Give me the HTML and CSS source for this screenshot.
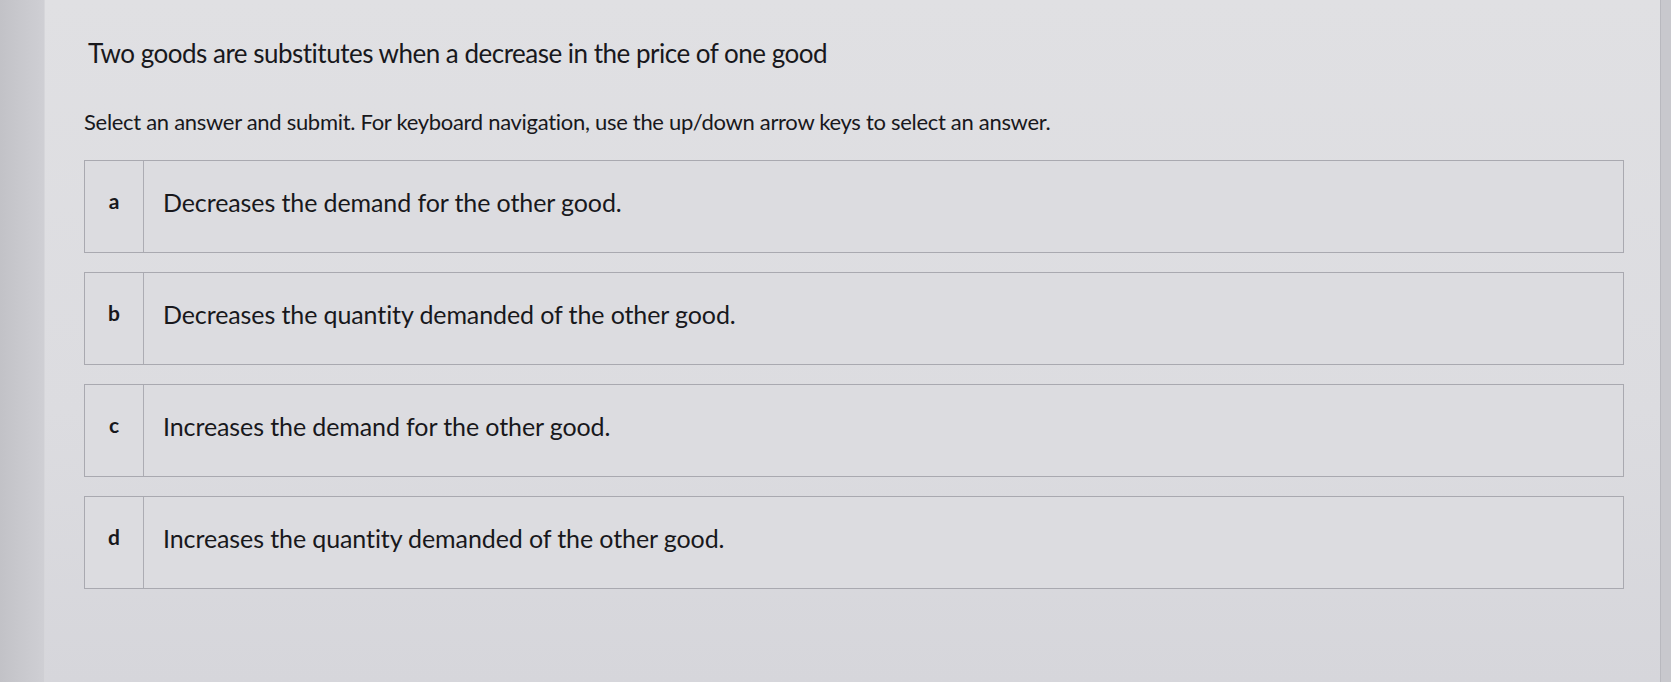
FILE: index.html
```html
<!DOCTYPE html>
<html>
<head>
<meta charset="utf-8">
<link rel="stylesheet" href="styles.css">
</head>
<body>
<div class="screen">
  <div class="edge-left"></div>
  <main class="panel">
    <h1 class="question">Two goods are substitutes when a decrease in the price of one good</h1>
    <p class="hint">Select an answer and submit. For keyboard navigation, use the up/down arrow keys to select an answer.</p>
    <ul class="options">
      <li class="option"><span class="letter">a</span><span class="text">Decreases the demand for the other good.</span></li>
      <li class="option"><span class="letter">b</span><span class="text">Decreases the quantity demanded of the other good.</span></li>
      <li class="option"><span class="letter">c</span><span class="text">Increases the demand for the other good.</span></li>
      <li class="option"><span class="letter">d</span><span class="text">Increases the quantity demanded of the other good.</span></li>
    </ul>
  </main>
  <div class="edge-right"></div>
</div>
</body>
</html>
```
FILE: styles.css
```css
html, body {
  margin: 0;
  padding: 0;
  height: 100%;
}
body {
  font-family: "Lato", "Liberation Sans", sans-serif;
  color: #18181c;
  background: #c9c9ce;
}
.screen {
  display: flex;
  height: 682px;
  overflow: hidden;
}
.edge-left {
  width: 44px;
  flex: none;
  background: linear-gradient(to right, #c2c2c7, #cfcfd4);
  border-right: 1px solid #d6d6da;
}
.edge-right {
  width: 10px;
  flex: none;
  background: #c8c8cd;
  border-left: 1px solid #b8b8be;
}
.panel {
  flex: 1;
  background: linear-gradient(to bottom, #e0e0e3 0%, #dcdce0 60%, #d6d6db 100%);
  padding: 35px 36px 0 39px;
}
.question {
  margin: 0 0 0 4px;
  font-size: 26px;
  font-weight: 400;
  letter-spacing: -0.5px;
  line-height: 36px;
}
.hint {
  margin: 37px 0 0 0;
  font-size: 22px;
  letter-spacing: -0.3px;
  line-height: 28px;
}
.options {
  list-style: none;
  margin: 24px 0 0 0;
  padding: 0;
  display: flex;
  flex-direction: column;
  gap: 19px;
}
.option {
  display: flex;
  height: 91px;
  border: 1px solid #a9a9b0;
  background: #dcdce0;
}
.letter {
  width: 59px;
  flex: none;
  border-right: 1px solid #acacb3;
  display: flex;
  align-items: center;
  justify-content: center;
  font-size: 21px;
  font-weight: 700;
  padding-bottom: 12px;
  box-sizing: border-box;
}
.text {
  display: flex;
  align-items: center;
  padding-left: 19px;
  padding-bottom: 10px;
  font-size: 25px;
  letter-spacing: -0.1px;
}
```
